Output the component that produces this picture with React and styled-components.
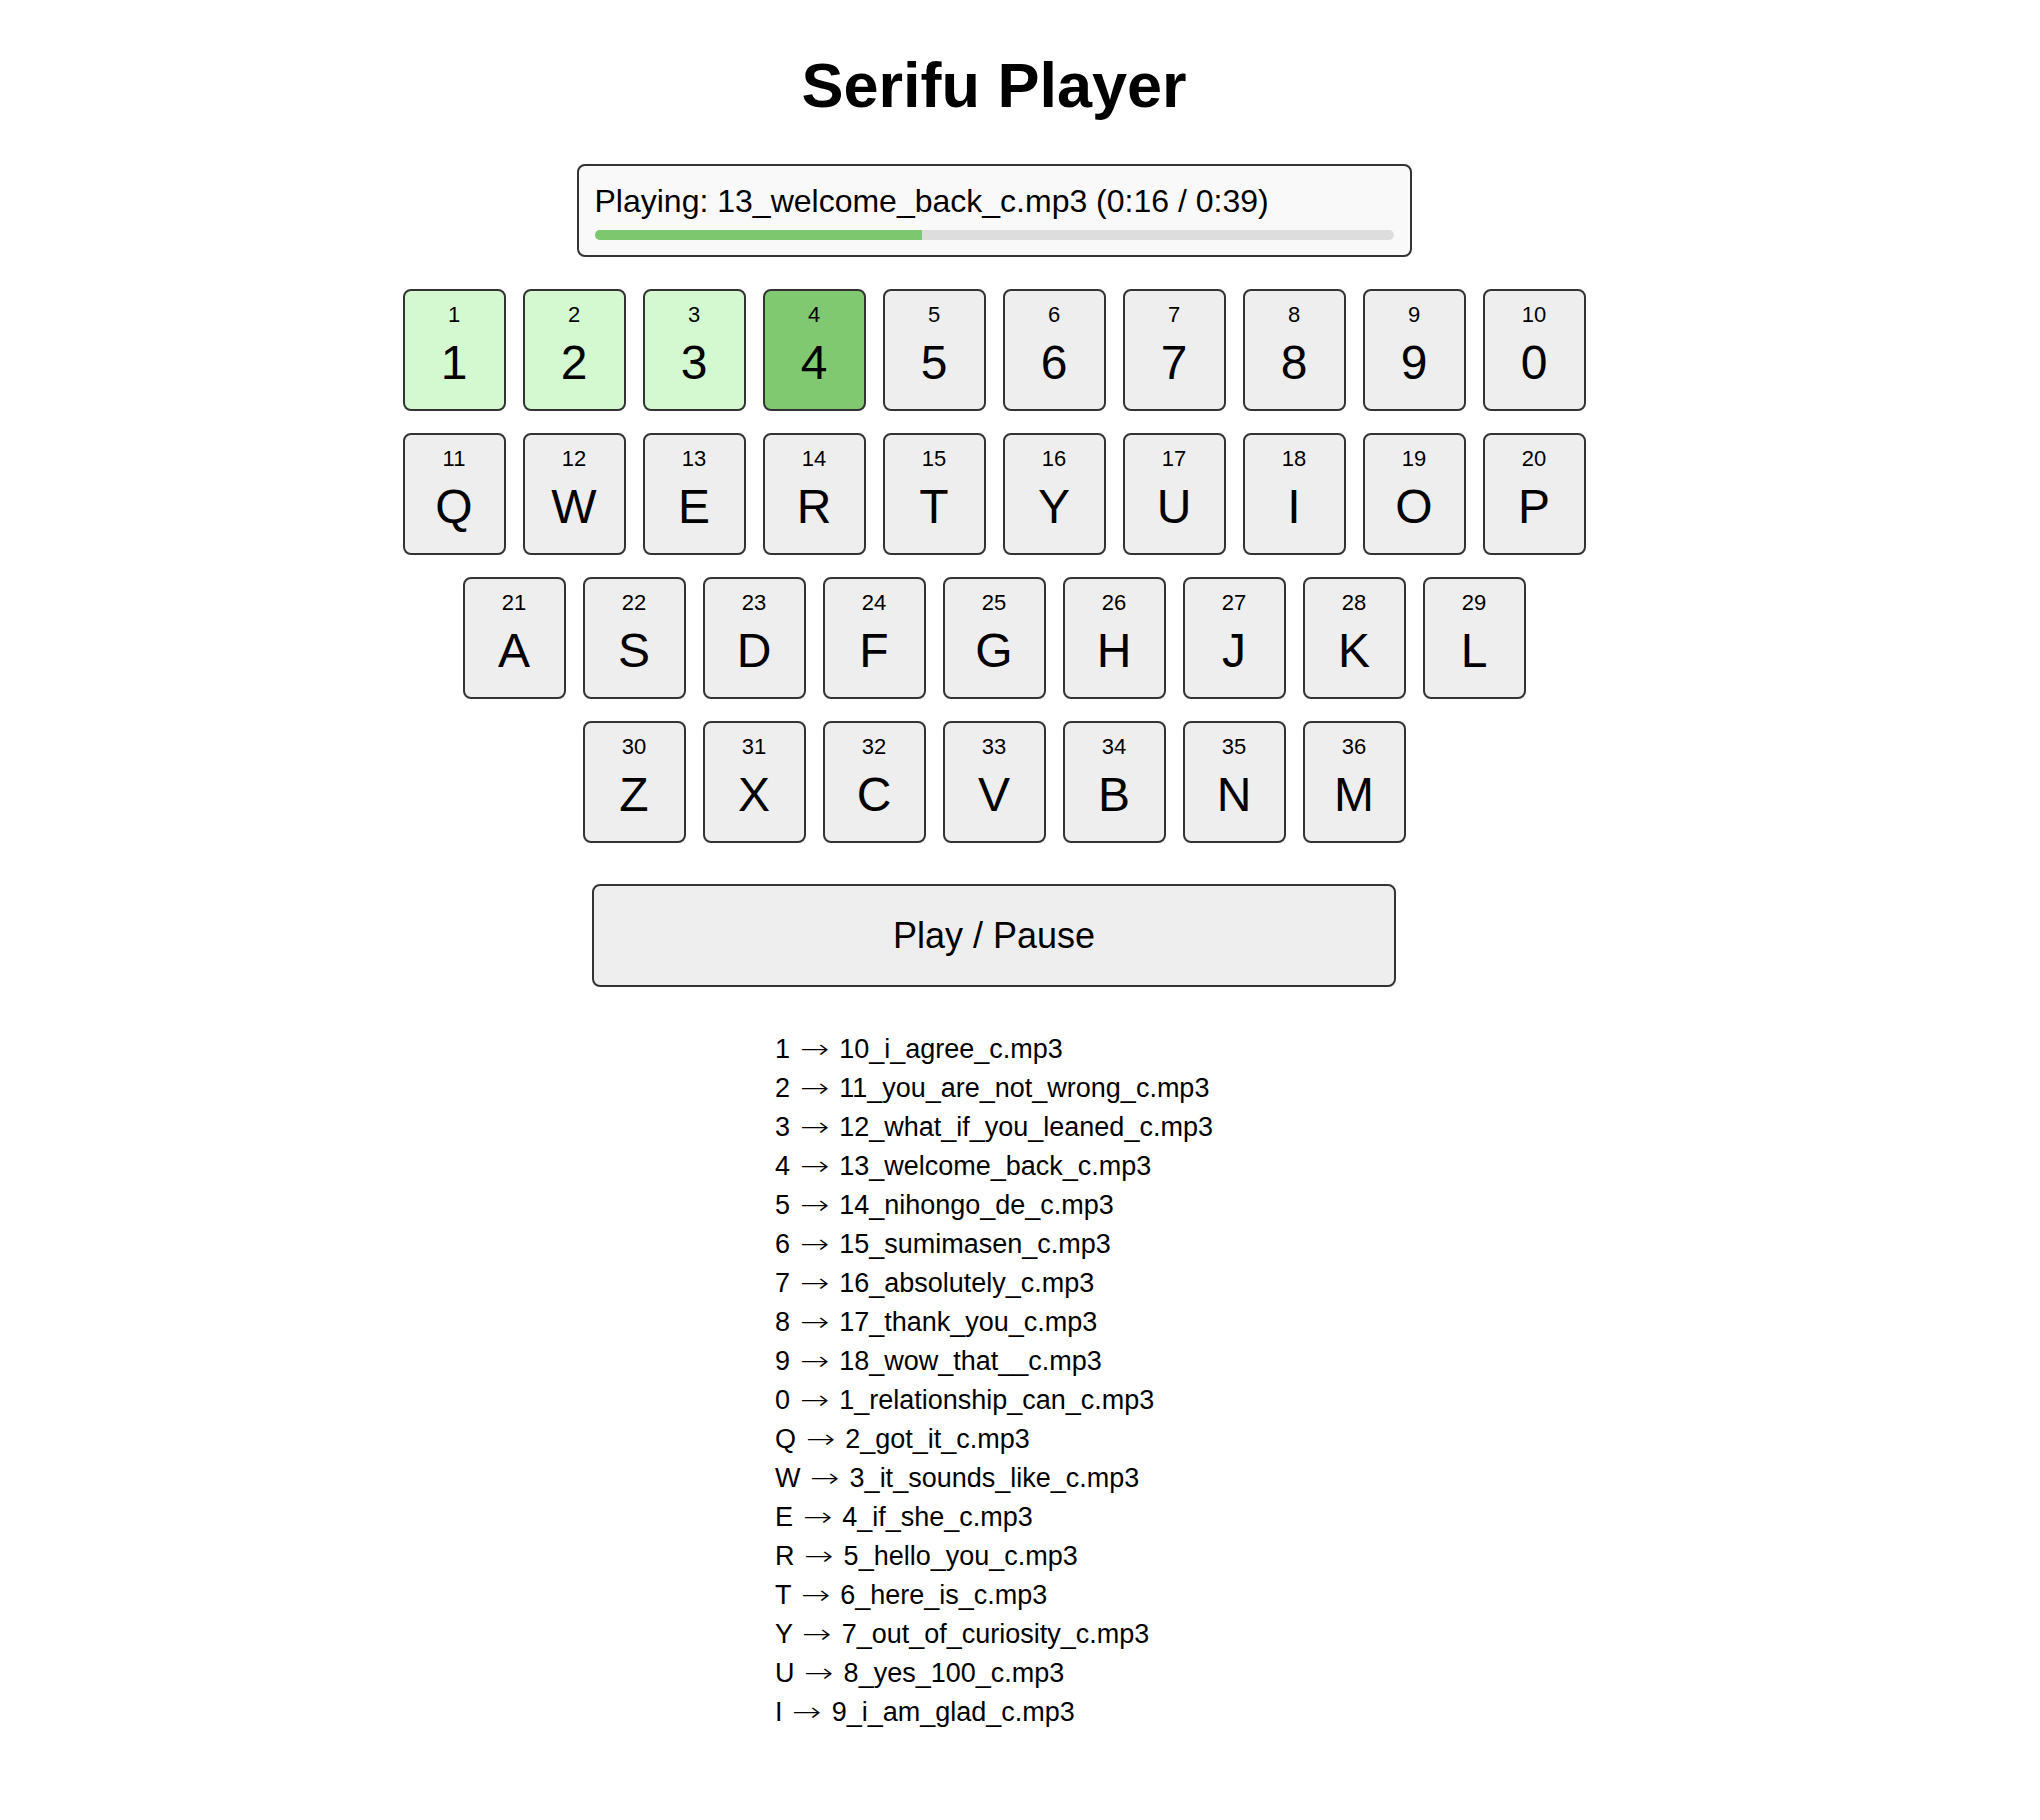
import React from 'react'
import styled, { createGlobalStyle } from 'styled-components'

const GlobalStyle = createGlobalStyle`
  body {
    margin: 0;
    background: #fff;
    color: #000;
    font-family: "Liberation Sans", Arial, Helvetica, sans-serif;
  }
`;

const Page = styled.div`
  width: 1988px;
  padding-top: 49px;
  display: flex;
  flex-direction: column;
  align-items: center;
`;

const Title = styled.h1`
  margin: 0 0 43px;
  font-size: 63px;
  font-weight: bold;
  line-height: normal;
`;

const Status = styled.div`
  width: 835px;
  box-sizing: border-box;
  padding: 17px 16px 15px;
  border: 2px solid #333;
  border-radius: 8px;
  background: #f9f9f9;
`;

const StatusText = styled.div`
  font-size: 32px;
  line-height: normal;
`;

const Track = styled.div`
  margin-top: 10px;
  height: 10px;
  border-radius: 5px;
  background: #ddd;
  overflow: hidden;
`;

const Fill = styled.div`
  height: 100%;
  background: #7dc86f;
`;

const Keyboard = styled.div`
  margin-top: 32px;
  display: flex;
  flex-direction: column;
  align-items: center;
  gap: 22px;
`;

const KeyRow = styled.div`
  display: flex;
  gap: 17px;
`;

const keyColors = {
  idle: '#eeeeee',
  played: '#d4f9d0',
  playing: '#80c971',
};

const Key = styled.div`
  width: 103px;
  height: 122px;
  box-sizing: border-box;
  padding-top: 12px;
  border: 2px solid #333;
  border-radius: 8px;
  background: ${({ $state }) => keyColors[$state]};
  display: flex;
  flex-direction: column;
  align-items: center;
`;

const KeyIndex = styled.span`
  font-size: 22px;
  line-height: 24px;
`;

const KeyLabel = styled.span`
  margin-top: 8px;
  font-size: 48px;
  line-height: normal;
`;

const PlayButton = styled.button`
  margin-top: 41px;
  width: 804px;
  height: 103px;
  border: 2px solid #333;
  border-radius: 8px;
  background: #eee;
  color: #000;
  font-family: inherit;
  font-size: 36px;
  cursor: pointer;
`;

const FileList = styled.div`
  margin-top: 43px;
  font-size: 27px;
  line-height: 39px;
  text-align: left;
`;

const Arrow = styled.span`
  display: inline-block;
  width: 34px;
  text-align: center;
  font-family: "DejaVu Sans", sans-serif;
  font-size: 26px;
  font-weight: 300;
  line-height: 27px;
  transform: scaleX(1.35);
`;

const rows = [
  ['1', '2', '3', '4', '5', '6', '7', '8', '9', '0'],
  ['Q', 'W', 'E', 'R', 'T', 'Y', 'U', 'I', 'O', 'P'],
  ['A', 'S', 'D', 'F', 'G', 'H', 'J', 'K', 'L'],
  ['Z', 'X', 'C', 'V', 'B', 'N', 'M'],
];

const files = [
  ['1', '10_i_agree_c.mp3'],
  ['2', '11_you_are_not_wrong_c.mp3'],
  ['3', '12_what_if_you_leaned_c.mp3'],
  ['4', '13_welcome_back_c.mp3'],
  ['5', '14_nihongo_de_c.mp3'],
  ['6', '15_sumimasen_c.mp3'],
  ['7', '16_absolutely_c.mp3'],
  ['8', '17_thank_you_c.mp3'],
  ['9', '18_wow_that__c.mp3'],
  ['0', '1_relationship_can_c.mp3'],
  ['Q', '2_got_it_c.mp3'],
  ['W', '3_it_sounds_like_c.mp3'],
  ['E', '4_if_she_c.mp3'],
  ['R', '5_hello_you_c.mp3'],
  ['T', '6_here_is_c.mp3'],
  ['Y', '7_out_of_curiosity_c.mp3'],
  ['U', '8_yes_100_c.mp3'],
  ['I', '9_i_am_glad_c.mp3'],
];

const playedCount = 3;
const current = 16;
const duration = 39;

const App = () => {
  let n = 0;
  return (
    <Page>
      <GlobalStyle />
      <Title>Serifu Player</Title>
      <Status>
        <StatusText>Playing: 13_welcome_back_c.mp3 (0:16 / 0:39)</StatusText>
        <Track>
          <Fill style={{ width: `${(current / duration) * 100}%` }} />
        </Track>
      </Status>
      <Keyboard>
        {rows.map((row, r) => (
          <KeyRow key={r}>
            {row.map((k) => {
              n += 1;
              const state = n <= playedCount ? 'played' : n === playedCount + 1 ? 'playing' : 'idle';
              return (
                <Key key={k} $state={state}>
                  <KeyIndex>{n}</KeyIndex>
                  <KeyLabel>{k}</KeyLabel>
                </Key>
              );
            })}
          </KeyRow>
        ))}
      </Keyboard>
      <PlayButton>Play / Pause</PlayButton>
      <FileList>
        {files.map(([k, f]) => (
          <div key={k}>{k} <Arrow>→</Arrow> {f}</div>
        ))}
      </FileList>
    </Page>
  )
}

export default App
